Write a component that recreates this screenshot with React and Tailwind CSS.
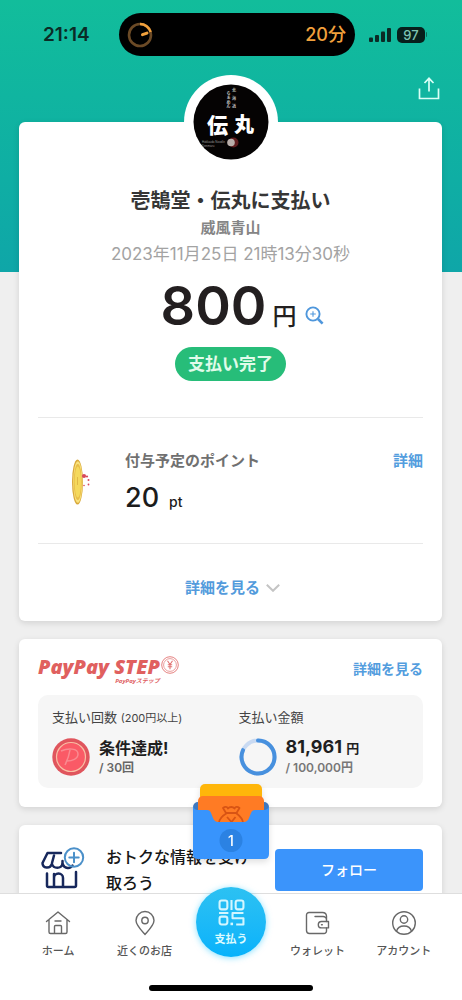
import React from "react";

function StatusBar() {
  return (
    <div className="flex items-center pt-[13px] pr-[35px] pl-[43px] text-[#0b2b26]">
      <div className="w-[76px] text-[19px] leading-6 font-semibold">21:14</div>
      <div className="flex h-[43px] flex-1 items-center justify-between rounded-full bg-black pr-[9px] pl-2 text-[#f0a03c]">
        <svg className="size-[26px]" viewBox="0 0 26 26" fill="none" aria-hidden="true">
          <circle cx="13" cy="13" r="11" stroke="#6b4a26" strokeWidth="2.6" />
          <path d="M13 2a11 11 0 0 1 10.6 8" stroke="#f0a03c" strokeWidth="2.6" />
          <path d="M15.500 12.700l4.500-1.600" stroke="#f0a03c" strokeWidth="3" strokeLinecap="round" />
        </svg>
        <span className="text-lg font-medium">20分</span>
      </div>
      <div className="ml-[14px] flex items-center gap-[6px]">
        <svg className="h-[14px] w-[22px]" viewBox="0 0 22 14" fill="currentColor" aria-hidden="true">
          <rect x="0" y="9.500" width="4" height="4.500" rx="1" />
          <rect x="6" y="7" width="4" height="7" rx="1" />
          <rect x="12" y="3.500" width="4" height="10.500" rx="1" />
          <rect x="18" y="0" width="4" height="14" rx="1" />
        </svg>
        <div className="flex items-center gap-px">
          <span className="flex h-4 w-7 items-center justify-center rounded-[5px] bg-[#07201c] text-[13px] leading-4 font-medium text-[#7fc4b4]">97</span>
          <span className="h-[5px] w-px rounded-r bg-[#0d6a5c]" />
        </div>
      </div>
    </div>
  );
}

function ShopLogo() {
  return (
    <div className="rounded-full bg-white p-[9px]">
      <svg className="size-[76px]" viewBox="0 0 76 76" role="img" aria-label="伝丸">
        <circle cx="38" cy="38" r="37.500" fill="#050303" />
        <g fill="#e8e6e4" fontFamily="'Noto Sans CJK JP',sans-serif" fontSize="4" textAnchor="middle" fontWeight="500">
          <text x="41" y="8">北</text>
          <text x="41" y="16">海</text>
          <text x="41" y="24">道</text>
          <text x="35.500" y="10.500">ら</text>
          <text x="35.500" y="15">ぁ</text>
          <text x="35.500" y="19.500">め</text>
          <text x="35.500" y="24">ん</text>
        </g>
        <g fill="#fff" fontFamily="'Noto Sans CJK JP',sans-serif" fontWeight="900">
          <text x="14" y="49" fontSize="21">伝</text>
          <text x="41" y="48" fontSize="20">丸</text>
        </g>
        <circle cx="40.500" cy="58.500" r="5" fill="#5e1c1e" />
        <circle cx="38" cy="58.500" r="3.800" fill="#b9aeaa" />
        <g fill="#9a9694" fontFamily="'Liberation Sans',sans-serif" fontSize="3">
          <text x="9" y="58.500">Hokkaido Noodle</text>
          <text x="9" y="62.500">Denmaru</text>
        </g>
      </svg>
    </div>
  );
}

function PointCoin() {
  return (
    <svg className="h-[48px] w-[30px]" viewBox="0 0 30 48" aria-hidden="true">
      <ellipse cx="9.500" cy="24" rx="5.500" ry="22.500" fill="#d9a93a" />
      <ellipse cx="9.800" cy="24" rx="4.600" ry="20.800" fill="#f9e27e" />
      <ellipse cx="9.800" cy="24" rx="4" ry="18" fill="#e8bd48" />
      <ellipse cx="9.800" cy="24" rx="3.200" ry="15.500" fill="#f5d95c" />
      <path d="M9.500 19v8" stroke="#dcb040" strokeWidth=".8" />
      <circle cx="16" cy="18" r="2.100" fill="#d8495a" />
      <g fill="#d8495a">
        <circle cx="19" cy="18.500" r="1.100" />
        <circle cx="20.500" cy="22" r="1" />
        <circle cx="16" cy="27.500" r=".8" />
        <circle cx="20.500" cy="26.500" r=".9" />
      </g>
    </svg>
  );
}

function PaymentCard() {
  return (
    <section className="flex flex-col rounded-md bg-white px-[19px] shadow-[0_2px_6px_rgba(0,0,0,0.12)]">
      <div className="-mt-[47px] flex justify-center">
        <ShopLogo />
      </div>
      <div className="mt-[17px] flex flex-col items-center">
        <h1 className="text-xl leading-[30px] font-bold text-[#363636]">壱鵠堂・伝丸に支払い</h1>
        <p className="text-[15px] leading-6 font-bold text-[#858585]">威風青山</p>
        <p className="text-[17px] leading-7 text-[#a3a3a3]">2023年11月25日 21時13分30秒</p>
        <p className="mt-2 flex items-baseline pl-6 text-[#231f20]">
          <span className="text-[54px] leading-[60px] font-semibold">800</span>
          <span className="ml-[6px] text-2xl leading-8 font-medium">円</span>
          <button type="button" aria-label="拡大" className="mb-[11px] ml-[9px] self-end">
            <svg className="size-[19px]" viewBox="0 0 19 19" fill="none" stroke="#4f97dc" aria-hidden="true">
              <circle cx="8" cy="8" r="6.600" strokeWidth="1.900" />
              <path d="M13 13l4.600 4.600" strokeWidth="2.600" />
              <path d="M8 5.200v5.600M5.200 8h5.600" strokeWidth="1.100" />
            </svg>
          </button>
        </p>
        <span className="mt-[11px] rounded-full bg-[#27bd79] px-[13px] py-1 text-[17px] leading-[26px] font-bold text-[#e0fbea]">支払い完了</span>
      </div>
      <div className="mt-9 flex items-start border-y border-[#e9e9e9] pt-[32px] pb-[27px]">
        <div className="flex w-[87px] shrink-0 pt-2 pl-[30px]">
          <PointCoin />
        </div>
        <div className="flex-1">
          <p className="text-[15px] leading-[22px] font-bold text-[#707070]">付与予定のポイント</p>
          <p className="mt-2 flex items-baseline text-[#1c1c1c]">
            <span className="text-[27px] leading-[36px] font-medium">20</span>
            <span className="ml-[10px] text-sm font-medium">pt</span>
          </p>
        </div>
        <a href="#points" className="text-[15px] leading-[22px] font-bold text-[#539dde]">詳細</a>
      </div>
      <button type="button" className="flex items-center justify-center gap-[6px] pt-[32px] pb-[21px] pl-1 text-[15px] leading-6 font-bold text-[#539bdc]">
        詳細を見る
        <svg className="h-2 w-[14px]" viewBox="0 0 14 8" fill="none" stroke="#c4c4c4" strokeWidth="2" aria-hidden="true">
          <path d="M.8.800l6.200 6 6.200-6" />
        </svg>
      </button>
    </section>
  );
}

function StepLogo() {
  return (
    <div className="flex items-start gap-px text-[#e0605f] italic">
      <div className="flex flex-col items-end">
        <span className="font-['Open_Sans'] text-xl leading-[22px] font-extrabold">PayPay STEP</span>
        <span className="font-['Open_Sans','Noto_Sans_CJK_JP',sans-serif] text-[6px] leading-[6px] font-bold">PayPayステップ</span>
      </div>
      <svg className="size-[18px]" viewBox="0 0 18 18" fill="none" stroke="#e27473" aria-hidden="true">
        <circle cx="9" cy="9" r="8.300" strokeWidth=".9" />
        <circle cx="9" cy="9" r="6.400" strokeWidth=".7" />
        <path d="M6.500 4.800l2.500 3.700 2.500-3.700M9 8.500v4.700M6.800 8.800h4.400M6.800 10.800h4.400" strokeWidth="1.100" />
      </svg>
    </div>
  );
}

function StepCard() {
  return (
    <section className="rounded-md bg-white px-[19px] pt-[17px] pb-[19px] shadow-[0_2px_6px_rgba(0,0,0,0.12)]">
      <div className="flex h-7 items-start justify-between">
        <StepLogo />
        <a href="#step" className="pt-px text-sm leading-6 font-bold text-[#539dde]">詳細を見る</a>
      </div>
      <div className="mt-[11px] grid grid-cols-2 rounded-[10px] bg-[#f6f6f6] px-[14px] py-[11px] text-[#444]">
        <div>
          <p className="text-[13px] leading-[22px]">
            支払い回数 <span className="text-[11px]">(200円以上)</span>
          </p>
          <div className="mt-2 flex items-center gap-[9px]">
            <svg className="size-[38px]" viewBox="0 0 38 38" fill="none" aria-hidden="true">
              <circle cx="19" cy="19" r="18.700" fill="#e0555d" />
              <circle cx="19" cy="19" r="14.500" fill="#fa5a66" stroke="#f8bfa5" strokeWidth="1.200" />
              <path d="M9 13c7-3 17-3 17 3 0 5-6 7-11 7M18 12c-1 6-3 11-5 15" stroke="#f98a90" strokeWidth="1.500" />
            </svg>
            <div>
              <p className="text-base leading-[22px] font-bold text-[#1f1f1f]">条件達成!</p>
              <p className="text-xs leading-[18px] font-semibold text-[#666]">/ 30回</p>
            </div>
          </div>
        </div>
        <div className="pl-2">
          <p className="text-[13px] leading-[22px]">支払い金額</p>
          <div className="mt-2 flex items-center gap-[9px]">
            <svg className="size-[38px]" viewBox="0 0 38 38" fill="none" strokeWidth="4" aria-hidden="true">
              <circle cx="19" cy="19" r="16.500" stroke="#c9daf2" />
              <path d="M19 2.500A16.500 16.500 0 1 1 4 12.200" stroke="#4790de" strokeLinecap="round" />
            </svg>
            <div>
              <p className="text-[18px] leading-[22px] font-bold whitespace-nowrap text-[#1f1f1f]">
                81,961 <span className="text-[13px]">円</span>
              </p>
              <p className="text-xs leading-[18px] font-semibold text-[#777]">/ 100,000円</p>
            </div>
          </div>
        </div>
      </div>
    </section>
  );
}

function FollowCard() {
  return (
    <section className="flex items-center rounded-md bg-white py-[19px] pr-[19px] pl-[22px] shadow-[0_2px_6px_rgba(0,0,0,0.12)]">
      <svg className="mb-1 h-[42px] w-[44px] shrink-0" viewBox="0 0 44 42" fill="none" stroke="#17285c" strokeWidth="2.500" strokeLinecap="round" strokeLinejoin="round" aria-hidden="true">
        <path d="M20 6H6.500L1.500 16c0 5.500 7.500 6 9.500 1 1.500 5 9 5 10.500 0 2 5 8 5 10 1.500" />
        <path d="M13 8.500L11 16M21.500 14v3" />
        <path d="M6 26.500V38.500a1.500 1.500 0 0 0 1.500 1.500H33.500a1.500 1.500 0 0 0 1.500-1.500V25" />
        <path d="M13 39.500V31a4.500 4.500 0 0 1 9 0v8.500M13 31v-4" />
        <circle cx="33" cy="10.500" r="9.200" stroke="#4b90c9" strokeWidth="2" />
        <path d="M33 5.800v9.400M28.300 10.500h9.400" stroke="#4b90c9" strokeWidth="2" />
      </svg>
      <p className="ml-[21px] flex-1 text-base leading-[26px] font-medium text-[#161616]">
        おトクな情報を受け
        <br />
        取ろう
      </p>
      <button type="button" className="h-[42px] w-[148px] shrink-0 rounded bg-[#3b94fb] text-sm font-medium text-white">フォロー</button>
    </section>
  );
}

function CouponFolder() {
  return (
    <button type="button" aria-label="クーポン" className="absolute -top-[110px] left-1/2 -translate-x-1/2 drop-shadow-md">
      <svg className="h-[76px] w-[76px]" viewBox="0 0 76 76" fill="none" aria-hidden="true">
        <rect x="0" y="18" width="76" height="50" rx="5" fill="#3f78bf" />
        <rect x="7" y="0" width="62" height="30" rx="5" fill="#ffb60a" />
        <rect x="5" y="12" width="66" height="40" rx="5" fill="#ff7b24" />
        <g stroke="#d85414" strokeWidth="1.800" strokeLinejoin="round">
          <path d="M33 29l-3-5c2-1.500 4-1.500 5 .5 1.500-2 5-2 6.500 0 1-2 3-2 5-.5l-3 5z" />
          <path d="M34 29c-5 3-8 6-8 10M43 29c4 3 7 6 7 10M34 33l4.500 5 4-5" />
        </g>
        <path d="M0 22q1 4 5 4h9q3 0 4 3l2 5q1.500 4 5 4h26q3.500 0 5-4l2-5q1-3 4-3h9q4 0 5-4v48q0 5-5 5H5q-5 0-5-5z" fill="#3894fc" />
        <circle cx="38" cy="56.500" r="11.500" fill="#2b82e3" />
      </svg>
      <span className="absolute inset-x-0 bottom-[9px] text-center text-sm leading-5 font-medium text-white">1</span>
    </button>
  );
}

function NavItem({ label, children }) {
  return (
    <a href={"#" + label} className="flex flex-1 flex-col items-center pt-4 text-[11px] leading-[18px] font-medium whitespace-nowrap text-[#555]">
      <svg className="size-[26px]" viewBox="0 0 26 26" fill="none" stroke="#686868" strokeWidth="1.400" strokeLinecap="round" strokeLinejoin="round" aria-hidden="true">
        {children}
      </svg>
      <span className="mt-[6px]">{label}</span>
    </a>
  );
}

function BottomNav() {
  return (
    <nav className="relative shrink-0 border-t border-[#dedede] bg-white">
      <CouponFolder />
      <div className="flex items-start px-[15px]">
        <NavItem label="ホーム">
          <path d="M1.500 11.500L13 2l11.500 9.500M4 9.500V22a1.500 1.500 0 0 0 1.500 1.500h15A1.500 1.500 0 0 0 22 22V9.500M10 11h6M9.500 23.500v-7a1 1 0 0 1 1-1h5a1 1 0 0 1 1 1v7" />
        </NavItem>
        <NavItem label="近くのお店">
          <path d="M13 24.500C9 20 4 15 4 10.500a9 9 0 0 1 18 0C22 15 17 20 13 24.500z" />
          <circle cx="13" cy="10.500" r="3.200" />
        </NavItem>
        <div className="flex flex-1 justify-center">
          <button type="button" className="-mt-[7px] flex size-[70px] flex-col items-center rounded-full bg-linear-to-b from-[#2cc1f2] to-[#05b2fb] pt-3 text-[11px] leading-4 font-bold text-[#dcfbff] shadow-[0_1px_6px_rgba(40,200,255,0.55)]">
            <svg className="size-[27px]" viewBox="0 0 26 26" fill="none" stroke="#d3f6ff" strokeWidth="2" strokeLinejoin="round" aria-hidden="true">
              <rect x="1.500" y="1.500" width="7.500" height="8.500" rx="2" />
              <path d="M13 1v9.500M1 13.500h9M24.500 13.500h-10.500v5h10.500v6h-7" />
              <rect x="17" y="1.500" width="7.500" height="8.500" rx="2" />
              <rect x="1.500" y="17" width="7.500" height="7.500" rx="2" />
              <path d="M12 24h2.500" strokeWidth="2.500" />
            </svg>
            <span className="mt-[5px]">支払う</span>
          </button>
        </div>
        <NavItem label="ウォレット">
          <path d="M22.500 11.500V6a4 4 0 0 0-4-3.500H5a2.500 2.500 0 0 0-2.500 2.500V20.500a3 3 0 0 0 3 3H20a2.500 2.500 0 0 0 2.500-2.500v-3M11 6.500h8a3.500 3.500 0 0 1 3.500 3.500" />
          <path d="M24.500 11.500h-7a3.200 3.200 0 0 0 0 6.400h7zM17.500 14.700h.8" />
        </NavItem>
        <NavItem label="アカウント">
          <circle cx="13" cy="13" r="11.300" />
          <circle cx="13" cy="9.500" r="3.700" />
          <path d="M5.500 21.300c1-4 4-5.300 7.500-5.300s6.500 1.300 7.500 5.300" />
        </NavItem>
      </div>
      <div className="mx-auto mt-[25px] mb-[9px] h-[6px] w-[164px] rounded-full bg-black" />
    </nav>
  );
}

export default function App() {
  return (
    <div className="flex h-dvh flex-col overflow-hidden bg-[#efefef] font-['Inter','Noto_Sans_CJK_JP',sans-serif]" lang="ja">
      <div className="min-h-0 flex-1 overflow-y-auto [scrollbar-width:none]">
        <header className="h-[272px] bg-linear-to-b from-[#12bd9b] to-[#0fa6a8]">
          <StatusBar />
          <div className="flex justify-end pt-[20px] pr-[22px]">
            <button type="button" aria-label="共有">
              <svg className="h-[24px] w-[22px]" viewBox="0 0 22 24" fill="none" stroke="#d9fff6" strokeWidth="1.700" aria-hidden="true">
                <path d="M1.500 12.500v10h19v-10M11 15.500V2.500M6.500 7L11 2.300 15.500 7" />
              </svg>
            </button>
          </div>
        </header>
        <main className="relative -mt-[150px] flex flex-col gap-[18px] pr-5 pl-[19px]">
          <PaymentCard />
          <StepCard />
          <FollowCard />
        </main>
      </div>
      <BottomNav />
    </div>
  );
}
